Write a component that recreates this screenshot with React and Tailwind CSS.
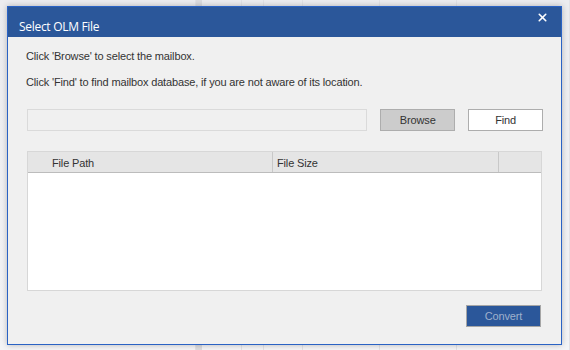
import { X } from "lucide-react";

const bgCols = [196, 6, 40, 22, 39, 77, 77, 113];

function App() {
  return (
    <div
      className="relative w-[570px] h-[350px] overflow-hidden bg-[#f4f4f6]"
      style={{ fontFamily: "'Liberation Sans', Arial, sans-serif" }}
    >
      {/* Spreadsheet behind the dialog */}
      <div className="flex h-full">
        {bgCols.map((w, i) => (
          <div
            key={i}
            className={
              i === 1
                ? "h-full bg-[#dcdcdf]"
                : "h-full border-r border-[#e2e2e6] bg-gradient-to-b from-[#ececef] to-[#f4f4f6]"
            }
            style={{ width: w }}
          />
        ))}
      </div>

      {/* Dialog window */}
      <div className="absolute left-[7px] top-[6px] w-[555px] h-[339px] flex flex-col border border-[#2a62c4] bg-[#f0f0f0] shadow-[0_0_6px_rgba(0,0,0,0.25)]">
        {/* Title bar */}
        <div className="h-[30px] flex items-center justify-between bg-[#2b579a] pl-[11px] pr-[12px] text-white">
          <span
            className="text-[12px] tracking-[-0.3px] pt-[9px]"
            style={{ fontFamily: "'Open Sans', sans-serif" }}
          >
            Select OLM File
          </span>
          <X size={13} strokeWidth={3} className="-mt-[9px]" />
        </div>

        <div className="flex-1 flex flex-col pl-[18px] pr-[18px] text-[11px] tracking-[-0.15px] text-[#333]">
          <p className="mt-[12px] leading-[15px]">Click 'Browse' to select the mailbox.</p>
          <p className="mt-[11px] leading-[15px]">
            Click 'Find' to find mailbox database, if you are not aware of its location.
          </p>

          <div className="mt-[19px] ml-[1px] flex items-center">
            <div className="w-[341px] h-[22px] border border-[#dadada] bg-[#f0f0f0]" />
            <button className="ml-[13px] w-[75px] h-[22px] border border-[#adadad] bg-[#cccccc] text-[11px] text-[#333]">
              Browse
            </button>
            <button className="ml-[13px] w-[75px] h-[22px] border border-[#adadad] bg-white text-[11px] text-[#333]">
              Find
            </button>
          </div>

          <div className="mt-[20px] ml-[1px] w-[515px] h-[140px] border border-[#d7d7d7] bg-white flex flex-col">
            <div className="h-[21px] flex bg-[#e5e5e5] border-b border-[#bcbcbc] text-[11px] text-[#333]">
              <div className="w-[245px] pl-[24px] pt-[2px] flex items-center border-r border-[#c8c8c8]">
                File Path
              </div>
              <div className="w-[226px] pl-[4px] pt-[2px] flex items-center border-r border-[#c8c8c8]">
                File Size
              </div>
              <div className="flex-1" />
            </div>
          </div>

          <div className="mt-[14px] flex justify-end pr-[2px]">
            <button className="w-[75px] h-[22px] border border-[#a6a6a6] bg-[#2b579a] text-[11px] text-[#9fb0cc]">
              Convert
            </button>
          </div>
        </div>
      </div>
    </div>
  );
}

export default App;
